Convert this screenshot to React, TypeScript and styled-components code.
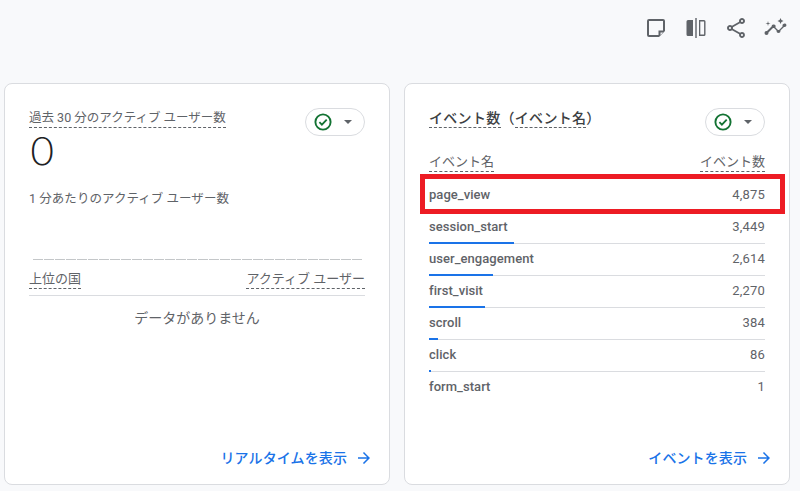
import React from "react";
import styled, { createGlobalStyle } from "styled-components";

const Global = createGlobalStyle`
  html, body { margin: 0; padding: 0; background: #f8f9fb; }
  body { font-family: Roboto, "Noto Sans CJK JP", sans-serif; color: #5f6368; }
`;

const Page = styled.div`
  width: 800px;
  height: 491px;
  overflow: hidden;
  position: relative;
  box-sizing: border-box;
  padding: 16px 10px 0 4px;
  display: flex;
  flex-direction: column;
`;

const Toolbar = styled.div`
  height: 24px;
  display: flex;
  justify-content: flex-end;
  gap: 16px;
  margin: 0 2px 43px 0;
`;

const ToolIcon = styled.svg`
  width: 24px;
  height: 24px;
  fill: #5f6368;
  display: block;
`;

const Cards = styled.div`
  display: flex;
  gap: 14px;
`;

const Card = styled.section`
  width: 386px;
  height: 402px;
  flex: none;
  box-sizing: border-box;
  background: #fff;
  border: 1px solid #dadce0;
  border-radius: 8px;
  padding: 23px 24px 0;
  display: flex;
  flex-direction: column;
`;

const CardHead = styled.div`
  display: flex;
  justify-content: space-between;
  align-items: flex-start;
  height: 30px;
  flex: none;
`;

const Dashed = styled.span`
  display: inline-block;
  border-bottom: 1px dashed #5f6368;
`;

const SmallTitle = styled.div`
  font-size: 12.5px;
  line-height: 18px;
  color: #5f6368;
  margin-top: 2px;
`;

const EventTitle = styled.div`
  font-size: 14px;
  line-height: 18px;
  font-weight: 500;
  letter-spacing: 0.3px;
  color: #3c4043;
  margin-top: 2px;
`;

const StatusPill = styled.div`
  width: 60px;
  height: 28px;
  margin-top: 1px;
  box-sizing: border-box;
  border: 1px solid #dadce0;
  border-radius: 14px;
  background: #fff;
  display: flex;
  align-items: center;
  padding-left: 7px;
  gap: 11px;
`;

const Caret = styled.span`
  width: 0;
  height: 0;
  border-left: 4.5px solid transparent;
  border-right: 4.5px solid transparent;
  border-top: 4.5px solid #5f6368;
`;

const BigNumber = styled.div`
  font-size: 38px;
  line-height: 28px;
  height: 28px;
  color: #202124;
  font-family: "Inter", Roboto, sans-serif;
  font-weight: 200;
  transform: scaleX(1.15);
  transform-origin: left center;
`;

const PerMinute = styled.div`
  font-size: 12.5px;
  line-height: 18px;
  letter-spacing: 0.05px;
  color: #5f6368;
  margin-top: 25px;
`;

const DashLine = styled.div`
  margin: 51px 3px 0 4px;
  height: 1px;
  background: repeating-linear-gradient(to right, #c4c7c9 0 10px, transparent 10px 11px);
`;

const TableHead = styled.div`
  display: flex;
  justify-content: space-between;
  align-items: flex-start;
  font-size: 13px;
  line-height: 18px;
  color: #5f6368;
`;

const CountryHead = styled(TableHead)`
  margin-top: 10px;
  padding-bottom: 6px;
  border-bottom: 1px solid #dadce0;
`;

const EventHead = styled(TableHead)`
  margin-top: 16px;
  height: 27px;
  flex: none;
`;

const Empty = styled.div`
  text-align: center;
  font-size: 14px;
  line-height: 20px;
  color: #5f6368;
  margin-top: 12px;
`;

const Row = styled.div`
  height: 32px;
  box-sizing: border-box;
  position: relative;
  display: flex;
  justify-content: space-between;
  align-items: center;
  padding-bottom: 2px;
  border-bottom: 1px solid #dadce0;
  font-size: 13px;
  font-weight: 500;
  letter-spacing: 0.05px;
  color: #5f6368;
  &:last-child {
    border-bottom: none;
    padding-bottom: 3px;
  }
`;

const Value = styled.span`
  font-weight: 400;
  font-size: 13px;
  letter-spacing: 0.2px;
`;

const Bar = styled.div`
  position: absolute;
  left: 0;
  bottom: -1px;
  height: 2px;
  background: #1a73e8;
`;

const Footer = styled.div`
  margin-top: auto;
  height: 36px;
  display: flex;
  justify-content: flex-end;
  align-items: flex-start;
  gap: 8px;
  margin-right: -8px;
  font-size: 14px;
  line-height: 20px;
  letter-spacing: 0.1px;
  font-weight: 500;
  color: #1a73e8;
`;

const Arrow = styled.svg`
  width: 18px;
  height: 18px;
  fill: #1a73e8;
  margin-top: 1px;
`;

const Highlight = styled.div`
  position: absolute;
  left: 420px;
  top: 174px;
  width: 365px;
  height: 40px;
  box-sizing: border-box;
  border: 5px solid #ed1c24;
`;

const Check = () => (
  <svg width="20" height="20" viewBox="0 0 20 20" fill="none">
    <circle cx="10" cy="10" r="7.6" stroke="#137333" strokeWidth="1.9" />
    <path d="M6.4 10.2l2.5 2.5 4.8-5" stroke="#137333" strokeWidth="1.8" />
  </svg>
);

const ArrowIcon = () => (
  <Arrow viewBox="0 0 24 24">
    <path d="M12 4l-1.41 1.41L16.17 11H4v2h12.17l-5.58 5.59L12 20l8-8z" />
  </Arrow>
);

const events = [
  { name: "page_view", value: 4875 },
  { name: "session_start", value: 3449 },
  { name: "user_engagement", value: 2614 },
  { name: "first_visit", value: 2270 },
  { name: "scroll", value: 384 },
  { name: "click", value: 86 },
  { name: "form_start", value: 1 },
];

export default function App() {
  return (
    <Page>
      <Global />
      <Toolbar>
        <ToolIcon viewBox="0 0 24 24">
          <path d="M19 5v9.500h-4.500V19H5V5h14m0-2H5a2 2 0 0 0-2 2v14a2 2 0 0 0 2 2h10l6-6V5a2 2 0 0 0-2-2zm-2.500 13.500H19L16.500 19v-2.500z" />
        </ToolIcon>
        <ToolIcon viewBox="0 0 24 24">
          <path d="M2.500 5.500A1.500 1.500 0 0 1 4 4h5v16H4a1.500 1.500 0 0 1-1.500-1.500zM11.300 2h1.400v20h-1.400zM15 4h5a1.500 1.500 0 0 1 1.500 1.500v13A1.500 1.500 0 0 1 20 20h-5zm1.300 1.400v13.200h3.800V5.400z" />
        </ToolIcon>
        <ToolIcon viewBox="0 0 24 24">
          <path d="M18 16.080c-.76 0-1.440.3-1.960.77L8.910 12.700c.05-.23.09-.46.09-.7s-.04-.47-.09-.7l7.050-4.110c.54.5 1.250.81 2.040.81 1.660 0 3-1.340 3-3s-1.340-3-3-3-3 1.340-3 3c0 .24.04.47.09.7L8.040 9.810C7.500 9.310 6.790 9 6 9c-1.660 0-3 1.340-3 3s1.340 3 3 3c.79 0 1.500-.31 2.040-.81l7.120 4.160c-.05.21-.08.43-.08.65 0 1.610 1.310 2.920 2.920 2.920s2.920-1.310 2.920-2.920-1.310-2.920-2.920-2.920zM18 4c.55 0 1 .45 1 1s-.45 1-1 1-1-.45-1-1 .45-1 1-1zM6 13c-.55 0-1-.45-1-1s.45-1 1-1 1 .45 1 1-.45 1-1 1zm12 7.020c-.55 0-1-.45-1-1s.45-1 1-1 1 .45 1 1-.45 1-1 1z" />
        </ToolIcon>
        <ToolIcon viewBox="0 0 24 24">
          <path d="M22.500 9a2 2 0 0 1-2 2c-.18 0-.35-.02-.51-.07l-3.560 3.550c.05.16.07.34.07.52a2 2 0 1 1-4 0c0-.18.02-.36.07-.52l-2.550-2.550c-.16.05-.34.07-.52.07s-.36-.02-.52-.07l-4.550 4.560c.05.16.07.33.07.51a2 2 0 1 1-2-2c.18 0 .35.02.51.07l4.560-4.550A2 2 0 1 1 11.500 11c0 .18-.02.36-.07.52l2.550 2.550c.16-.05.34-.07.52-.07s.36.02.52.07l3.550-3.560A2 2 0 1 1 22.500 9z" />
          <path d="M16.500 8l.94-2.070L19.500 5l-2.060-.93L16.500 2l-.92 2.070L13.500 5l2.080.93zM4 10l.5-2 2-.5-2-.5L4 5l-.5 2-2 .5 2 .5z" />
        </ToolIcon>
      </Toolbar>
      <Cards>
        <Card>
          <CardHead>
            <SmallTitle>
              <Dashed>過去 30 分のアクティブ ユーザー数</Dashed>
            </SmallTitle>
            <StatusPill>
              <Check />
              <Caret />
            </StatusPill>
          </CardHead>
          <BigNumber>0</BigNumber>
          <PerMinute>1 分あたりのアクティブ ユーザー数</PerMinute>
          <DashLine />
          <CountryHead>
            <Dashed>上位の国</Dashed>
            <Dashed>アクティブ ユーザー</Dashed>
          </CountryHead>
          <Empty>データがありません</Empty>
          <Footer>
            リアルタイムを表示
            <ArrowIcon />
          </Footer>
        </Card>
        <Card>
          <CardHead>
            <EventTitle>
              <Dashed>イベント数</Dashed>（<Dashed>イベント名</Dashed>）
            </EventTitle>
            <StatusPill>
              <Check />
              <Caret />
            </StatusPill>
          </CardHead>
          <EventHead>
            <Dashed>イベント名</Dashed>
            <Dashed>イベント数</Dashed>
          </EventHead>
          <div>
            {events.map((e) => (
              <Row key={e.name}>
                <span>{e.name}</span>
                <Value>{e.value.toLocaleString("en-US")}</Value>
                {e.name !== "form_start" && (
                  <Bar style={{ width: `${(e.value / 4875) * 120}px` }} />
                )}
              </Row>
            ))}
          </div>
          <Footer>
            イベントを表示
            <ArrowIcon />
          </Footer>
        </Card>
      </Cards>
      <Highlight />
    </Page>
  );
}
